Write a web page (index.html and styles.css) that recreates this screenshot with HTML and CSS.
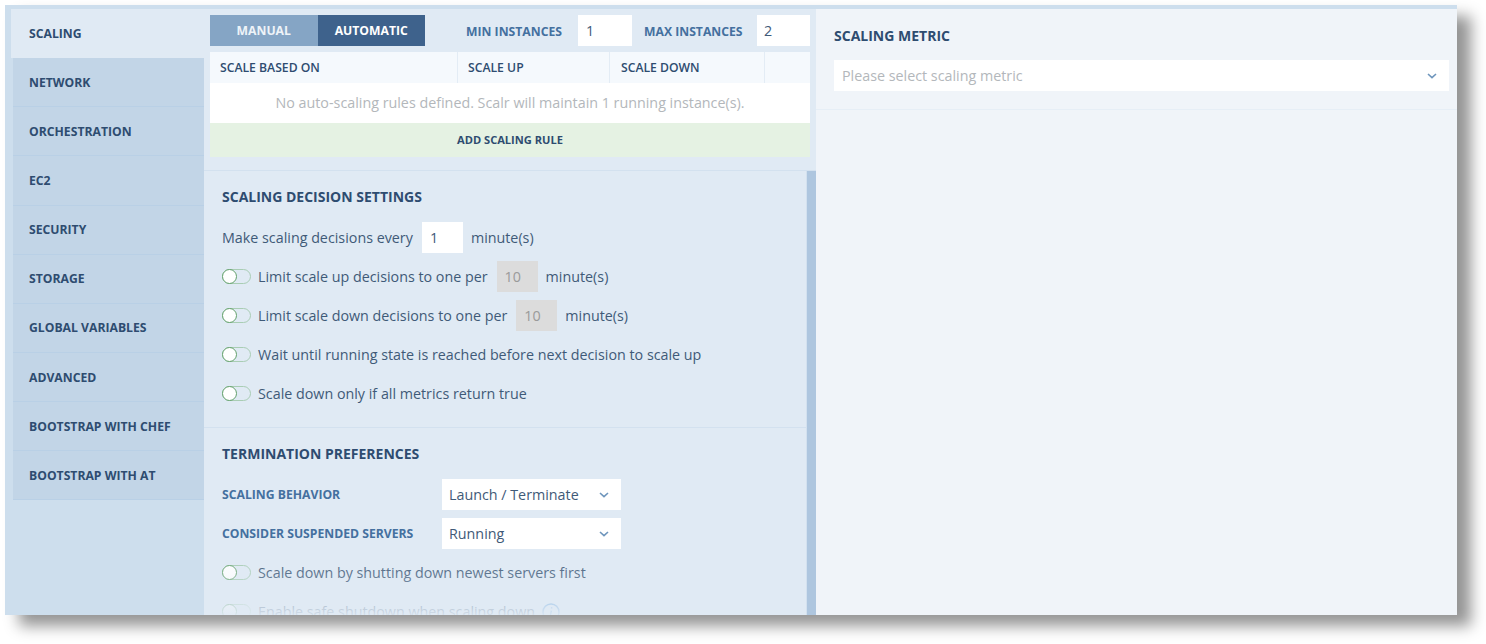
FILE: index.html
```html
<!DOCTYPE html>
<html lang="en">
<head>
<meta charset="utf-8">
<title>Scaling</title>
<link rel="stylesheet" href="styles.css">
</head>
<body>
<div class="window">
  <nav class="sidebar">
    <div class="tab active">SCALING</div>
    <div class="tab">NETWORK</div>
    <div class="tab">ORCHESTRATION</div>
    <div class="tab">EC2</div>
    <div class="tab">SECURITY</div>
    <div class="tab">STORAGE</div>
    <div class="tab">GLOBAL VARIABLES</div>
    <div class="tab">ADVANCED</div>
    <div class="tab">BOOTSTRAP WITH CHEF</div>
    <div class="tab">BOOTSTRAP WITH AT</div>
  </nav>
  <main class="middle">
    <section class="top">
      <div class="toolbar">
        <div class="segment">
          <div class="seg seg-off">MANUAL</div>
          <div class="seg seg-on">AUTOMATIC</div>
        </div>
        <span class="field-label min-label">MIN INSTANCES</span>
        <div class="input min-input">1</div>
        <span class="field-label max-label">MAX INSTANCES</span>
        <div class="input max-input">2</div>
      </div>
      <div class="thead">
        <div class="th th1">SCALE BASED ON</div>
        <div class="th th2">SCALE UP</div>
        <div class="th th3">SCALE DOWN</div>
        <div class="th th4"></div>
      </div>
      <div class="tbody">No auto-scaling rules defined. Scalr will maintain 1 running instance(s).</div>
      <div class="add-rule">ADD SCALING RULE</div>
    </section>
    <div class="scroller">
      <div class="scroll-content">
        <section class="group group-first">
          <h2 class="heading">SCALING DECISION SETTINGS</h2>
          <div class="row"><span>Make scaling decisions every</span><div class="input small">1</div><span>minute(s)</span></div>
          <div class="row"><span class="toggle"><i></i></span><span>Limit scale up decisions to one per</span><div class="input small off">10</div><span>minute(s)</span></div>
          <div class="row"><span class="toggle"><i></i></span><span>Limit scale down decisions to one per</span><div class="input small off">10</div><span>minute(s)</span></div>
          <div class="row"><span class="toggle"><i></i></span><span>Wait until running state is reached before next decision to scale up</span></div>
          <div class="row"><span class="toggle"><i></i></span><span>Scale down only if all metrics return true</span></div>
        </section>
        <section class="group">
          <h2 class="heading">TERMINATION PREFERENCES</h2>
          <div class="row"><span class="field-label row-label">SCALING BEHAVIOR</span>
            <div class="select combo"><span>Launch / Terminate</span><svg class="chev" viewBox="0 0 10 6"><path d="M1 1l4 3.6L9 1"/></svg></div></div>
          <div class="row"><span class="field-label row-label">CONSIDER SUSPENDED SERVERS</span>
            <div class="select combo"><span>Running</span><svg class="chev" viewBox="0 0 10 6"><path d="M1 1l4 3.6L9 1"/></svg></div></div>
          <div class="row"><span class="toggle"><i></i></span><span>Scale down by shutting down newest servers first</span></div>
          <div class="row"><span class="toggle"><i></i></span><span>Enable safe shutdown when scaling down</span>
            <svg class="info" viewBox="0 0 18 18"><circle cx="9" cy="9" r="8"/><path d="M9.6 4.2v1.4M9.4 7.6L8.2 13.4"/></svg></div>
        </section>
      </div>
      <div class="scrollbar"></div>
      <div class="fade"></div>
    </div>
  </main>
  <aside class="right">
    <div class="right-head">
      <h2 class="heading metric-heading">SCALING METRIC</h2>
      <div class="select metric"><span>Please select scaling metric</span><svg class="chev" viewBox="0 0 10 6"><path d="M1 1l4 3.6L9 1"/></svg></div>
    </div>
  </aside>
</div>
</body>
</html>
```
FILE: styles.css
```css
* { box-sizing: border-box; }
html, body { margin: 0; height: 100%; background: #fff; overflow: hidden; }
body { padding: 5px 0 0 5px; font-family: "Open Sans", "Liberation Sans", sans-serif; color: #3f5a78; }

.window {
  display: flex;
  width: 1452px;
  height: 610px;
  padding-top: 4px;
  background: #cddeed;
  overflow: hidden;
  box-shadow: 14px 11px 14px rgba(0, 0, 0, .42);
}

.sidebar { width: 199px; padding-left: 8px; flex: none; }
.tab {
  height: 49.15px;
  padding: 0 0 0 16px;
  display: flex;
  align-items: center;
  background: #c2d5e7;
  border-bottom: 1px solid #b9d0e6;
  font-size: 12.2px;
  font-weight: 700;
  color: #2e4c70;
}
.tab.active {
  margin-left: -2px;
  padding-left: 18px;
  background: #e0eaf4;
  border-bottom: 0;
}

.middle { width: 612px; flex: none; display: flex; flex-direction: column; background: #e0eaf4; min-height: 0; }
.top { height: 162px; flex: none; padding: 6px 6px 0; border-bottom: 1px solid #d3e1ef; }
.toolbar { display: flex; height: 31px; align-items: center; }
.segment { display: flex; height: 31px; width: 215px; }
.seg { flex: 1; display: flex; align-items: center; justify-content: center; font-size: 12.2px; font-weight: 700; color: #fff; }
.seg-off { background: #85a5c5; color: #eef3f8; }
.seg-on { background: #3e628c; }
.field-label { font-size: 12.2px; font-weight: 700; color: #44709f; }
.min-label { margin-left: 41px; width: 112px; padding-top: 1px; }
.max-label { margin-left: 12px; width: 113px; padding-top: 1px; }
.input { height: 31px; background: #fff; display: flex; align-items: center; font-size: 14.3px; color: #3f5a78; }
.min-input { width: 54px; padding-left: 8px; }
.max-input { width: 53px; padding-left: 7px; }

.thead { display: flex; height: 31px; margin-top: 6px; background: #f5f9fd; font-size: 12.2px; font-weight: 600; color: #2e4c70; }
.th { display: flex; align-items: center; border-right: 1px solid #e3ecf5; padding-left: 10px; }
.th1 { width: 248px; }
.th2 { width: 152px; padding-left: 10px; }
.th3 { width: 155px; padding-left: 11px; }
.th4 { flex: 1; border-right: 0; }
.tbody { height: 40px; padding-bottom: 1px; background: #fff; display: flex; align-items: center; justify-content: center; font-size: 14.3px; color: #b3b7bb; }
.add-rule { height: 34px; padding-bottom: 2px; background: #e5f2e3; display: flex; align-items: center; justify-content: center; font-size: 11.1px; font-weight: 700; color: #2e4c70; }

.scroller { flex: 1; min-height: 0; position: relative; overflow: hidden; }
.scroll-content { width: 602px; }
.scrollbar { position: absolute; right: 0; top: 0; bottom: 0; width: 10px; background: #aec6df; border-left: 1px solid #d3e1ef; }
.fade {
  position: absolute;
  left: 0; right: 10px; bottom: 0;
  height: 60px;
  background: linear-gradient(to bottom, rgba(224, 234, 244, 0), rgba(224, 234, 244, .3) 45%, rgba(224, 234, 244, .92));
}

.group { padding: 0 18px 18px; border-bottom: 1px solid #d3e1ef; }
.group-first { padding-top: 16px; }
.group + .group { padding-top: 16px; border-bottom: 0; }
.heading { margin: 0 0 15px; height: 20px; line-height: 20px; font-size: 14px; font-weight: 700; color: #2e4c70; }
.row { display: flex; align-items: center; height: 31px; margin-bottom: 8px; font-size: 14.3px; color: #3f5a78; white-space: nowrap; }
.row:last-child { margin-bottom: 0; }
.small { width: 41px; padding-left: 8px; margin: 0 8px 0 9px; }
.off { background: #dcdcdc; color: #9a9a9a; }
.row-label { width: 220px; }
.toggle {
  width: 29px; height: 15px;
  margin-right: 7px;
  border-radius: 8px;
  border: 1px solid #a9cdb4;
  position: relative;
  flex: none;
}
.toggle i {
  position: absolute;
  left: -1px; top: -1px;
  width: 15px; height: 15px;
  border-radius: 50%;
  background: #fff;
  border: 1.5px solid #62a06b;
}
.select { background: #fff; display: flex; align-items: center; justify-content: space-between; height: 31px; font-size: 14.3px; }
.combo { width: 179px; padding: 0 12px 0 7px; }
.chev { width: 10px; height: 6px; fill: none; stroke: #6e95bc; stroke-width: 1.6; }
.info { width: 18px; height: 18px; margin-left: 7px; fill: none; stroke: #5f9fdc; stroke-width: 1.4; }

.right { flex: 1; background: #f0f4f9; }
.right-head { height: 101px; padding: 17px 8px 0 18px; border-bottom: 1px solid #e6eef6; }
.metric-heading { margin-bottom: 14px; height: 20px; }
.metric { padding: 0 12px 0 8px; color: #b3b7bb; }
```
